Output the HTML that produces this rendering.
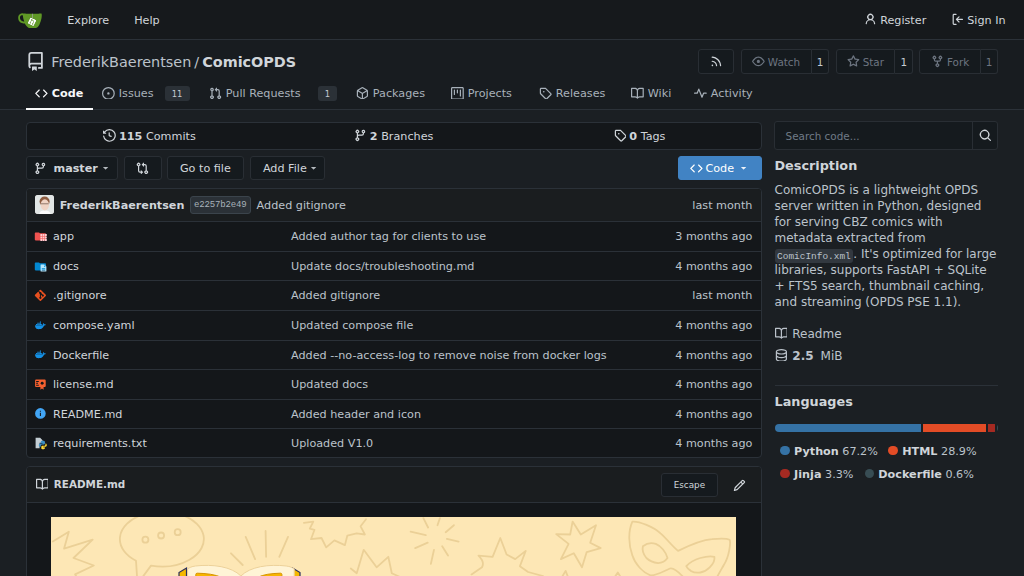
<!DOCTYPE html>
<html lang="en">
<head>
<meta charset="utf-8">
<title>FrederikBaerentsen/ComicOPDS</title>
<style>
*{box-sizing:border-box;margin:0;padding:0}
html,body{width:1024px;height:576px;overflow:hidden;background:#1b1f23}
body{font-family:"DejaVu Sans","Liberation Sans",sans-serif;font-size:11.2px;color:#d0d5da;position:relative;line-height:1}
svg{display:block;fill:currentColor;flex:none}
.abs{position:absolute}
.row{display:flex;align-items:center;white-space:nowrap;padding-top:1.6px}
.row>svg{margin-top:-1.6px}
b{font-weight:700}
#nav{left:0;top:0;width:1024px;height:40px;background:#16191c;border-bottom:1px solid #2b3138}
#nav .t{position:absolute;top:0;height:39px;font-size:11.2px;color:#d0d5da;gap:3.2px}
#sec{left:0;top:40px;width:1024px;height:70px;background:#181c20;border-bottom:1px solid #2b3138}
#title{left:25.6px;top:51.4px;height:20px;font-size:14.4px;color:#bcc3cb}
#title b{color:#d0d5da}
.hbtn{position:absolute;top:49px;height:24.600px;border:1px solid #292e34;background:#151a1e;color:#6d7581;font-size:10.4px;border-radius:3px;justify-content:center;gap:3px}
.hcnt{position:absolute;top:49px;height:24.600px;border:1px solid #292e34;background:#151a1e;color:#c4cad0;font-size:10.4px;border-radius:0 3px 3px 0;justify-content:center;border-left:none}
.tab{position:absolute;top:77px;height:32px;font-size:11.2px;color:#a8b1ba;gap:4px}
.tab.act{color:#f7f8f9;font-weight:700}
.lbl{display:inline-flex;align-items:center;justify-content:center;background:#2b3137;color:#c4cad0;font-size:8.4px;border-radius:3px;height:15px;font-weight:400;padding-top:1px}
.box{position:absolute;background:#14171a;border:1px solid #2b3138;border-radius:4px}
.btn{position:absolute;top:156.2px;height:23.6px;border:1px solid #292e34;background:#151a1e;color:#d0d5da;font-size:11.2px;border-radius:3px}
.fr{position:absolute;left:0;width:734px;height:29.570px;border-top:1px solid #2b3138;font-size:11.2px}
.fr .n{position:absolute;left:26px;top:0;height:100%;color:#d0d5da}
.fr .i{position:absolute;left:7.4px;top:7.8px}
.fr .m{position:absolute;left:264px;top:0;height:100%;color:#bcc3cb}
.fr .d{position:absolute;right:8.6px;top:0;height:100%;color:#bcc3cb}
.fr .row{padding-top:1px}
.desc{left:774.5px;width:240px;font-size:12px;line-height:16px;color:#bcc3cb}
code,.mono{font-family:"Liberation Mono","DejaVu Sans Mono",monospace}
code{line-height:1;font-size:9.45px;background:#32383f;border-radius:3px;padding:1.5px 2.6px;color:#bcc3cb}
.lang{font-size:11.2px;color:#bcc3cb}.lang i{display:block;width:9.8px;height:9.8px;border-radius:50%;margin-right:4px;margin-top:-1.6px}.lang b{color:#d0d5da}
</style>
</head>
<body>
<!-- NAVBAR -->
<div id="nav" class="abs">
  <svg class="abs" style="left:17.8px;top:7.7px" width="24" height="24" viewBox="0 0 640 640"><path d="M395.9 484.2l-126.9-61c-12.500-6-17.900-21.200-11.800-33.800l61-126.900c6-12.500 21.200-17.900 33.800-11.800 17.200 8.300 27.100 13 27.100 13l-.1-109.200 16.700-.1.100 117.100s57.400 24.200 83.100 40.100c3.700 2.300 10.200 6.800 12.900 14.400 2.100 6.100 2 13.100-1 19.300l-61 126.900c-6.200 12.700-21.400 18.100-33.900 12z" fill="#fff"/><path d="M622.700 149.800c-4.100-4.100-9.600-4-9.600-4s-117.200 6.600-177.900 8c-13.300.3-26.500.6-39.600.7v117.200c-5.500-2.600-11.100-5.300-16.600-7.900 0-36.400-.1-109.200-.1-109.200-29 .4-89.200-2.200-89.200-2.200s-141.400-7.100-156.800-8.500c-9.800-.6-22.500-2.100-39 1.500-8.700 1.800-33.500 7.400-53.800 26.900C-4.900 212.400 6.600 276.200 8 285.800c1.700 11.700 6.900 44.200 31.700 72.500 45.800 56.100 144.400 54.800 144.400 54.800s12.100 28.900 30.600 55.500c25 33.100 50.700 58.900 75.700 62 63 0 188.900-.1 188.900-.1s12 .1 28.300-10.300c14-8.500 26.500-23.400 26.500-23.400S547 483 565 451.500c5.500-9.700 10.100-19.100 14.100-28 0 0 55.200-117.100 55.200-231.100-1.100-34.500-9.600-40.600-11.600-42.600zM125.600 353.900c-25.900-8.500-36.900-18.700-36.900-18.700S69.600 321.800 60 295.400c-16.500-44.200-1.400-71.200-1.400-71.200s8.400-22.500 38.500-30c13.800-3.700 31-3.100 31-3.100s7.100 59.400 15.700 94.200c7.200 29.200 24.800 77.700 24.800 77.700s-26.100-3.100-43-9.100zm300.300 107.600s-6.100 14.500-19.600 15.400c-5.800.4-10.300-1.200-10.300-1.200s-.3-.1-5.300-2.100l-112.900-55s-10.900-5.700-12.800-15.600c-2.200-8.100 2.700-18.100 2.700-18.100L322 273s4.800-9.700 12.200-13c.6-.3 2.300-1 4.500-1.500 8.100-2.100 18 2.800 18 2.800L467.400 315s12.600 5.700 15.300 16.200c1.900 7.400-.5 14-1.800 17.200-6.300 15.400-55 113.100-55 113.100z" fill="#609926"/><path d="M326.800 380.100c-8.200.1-15.400 5.800-17.300 13.800-1.900 8 2 16.300 9.100 20 7.700 4 17.500 1.800 22.700-5.400 5.100-7.100 4.300-16.900-1.800-23.100l24-49.100c1.500.1 3.700.2 6.200-.5 4.100-.9 7.100-3.600 7.100-3.600 4.200 1.800 8.600 3.800 13.200 6.100 4.800 2.400 9.300 4.900 13.400 7.300.9.500 1.800 1.100 2.800 1.900 1.600 1.300 3.400 3.100 4.700 5.500 1.900 5.500-1.900 14.900-1.900 14.900-2.300 7.600-18.400 40.600-18.400 40.600-8.100-.2-15.300 5-17.700 12.500-2.600 8.100 1.100 17.300 8.900 21.300 7.800 4 17.400 1.700 22.500-5.300 5-6.800 4.600-16.300-1.100-22.600 1.900-3.700 3.700-7.400 5.600-11.300 5-10.400 13.500-30.400 13.500-30.400.9-1.700 5.700-10.300 2.700-21.300-2.500-11.400-12.600-16.700-12.600-16.700-12.200-7.900-29.200-15.200-29.200-15.200s0-4.100-1.100-7.100c-1.100-3.100-2.800-5.100-3.900-6.300 4.700-9.700 9.400-19.300 14.100-29-4.100-2-8.100-4-12.200-6.100-4.800 9.800-9.700 19.700-14.500 29.500-6.700-.1-12.900 3.500-16.100 9.400-3.400 6.300-2.700 14.100 1.900 19.800l-24.600 50.400z" fill="#609926"/></svg>
  <div class="t row" style="left:67.2px">Explore</div>
  <div class="t row" style="left:134.2px">Help</div>
  <div class="t row" style="left:864.2px"><svg width="12.8" height="12.8" viewBox="0 0 16 16"><path d="M10.561 8.073a6.005 6.005 0 0 1 3.432 5.142.75.75 0 1 1-1.498.07 4.5 4.5 0 0 0-8.99 0 .75.75 0 0 1-1.498-.07 6.004 6.004 0 0 1 3.431-5.142 3.999 3.999 0 1 1 5.123 0ZM10.5 5a2.5 2.5 0 1 0-5 0 2.5 2.5 0 0 0 5 0Z"/></svg>Register</div>
  <div class="t row" style="left:951.2px"><svg width="12.8" height="12.8" viewBox="0 0 16 16"><path d="M2 2.75C2 1.784 2.784 1 3.75 1h2.5a.75.75 0 0 1 0 1.5h-2.5a.25.25 0 0 0-.25.25v10.5c0 .138.112.25.25.25h2.5a.75.75 0 0 1 0 1.5h-2.5A1.75 1.75 0 0 1 2 13.25Zm6.56 4.5h5.69a.75.75 0 0 1 0 1.5H8.56l1.97 1.97a.749.749 0 0 1-.326 1.275.749.749 0 0 1-.734-.215L6.22 8.53a.75.75 0 0 1 0-1.06l3.25-3.25a.749.749 0 0 1 1.275.326.749.749 0 0 1-.215.734Z"/></svg>Sign In</div>
</div>
<!-- REPO HEADER -->
<div id="sec" class="abs"></div>
<div id="title" class="abs row"><svg width="19.2" height="19.2" viewBox="0 0 16 16" style="margin-right:6.4px;color:#d0d5da"><path d="M2 2.5A2.5 2.5 0 0 1 4.5 0h8.75a.75.75 0 0 1 .75.75v12.5a.75.75 0 0 1-.75.75h-2.5a.75.75 0 0 1 0-1.5h1.75v-2h-8a1 1 0 0 0-.714 1.7.75.75 0 1 1-1.072 1.05A2.495 2.495 0 0 1 2 11.5Zm10.5-1h-8a1 1 0 0 0-1 1v6.708A2.486 2.486 0 0 1 4.5 9h8ZM5 12.25a.25.25 0 0 1 .25-.25h3.5a.25.25 0 0 1 .25.25v3.25a.25.25 0 0 1-.4.2l-1.45-1.087a.249.249 0 0 0-.3 0L5.4 15.7a.25.25 0 0 1-.4-.2Z"/></svg><span>FrederikBaerentsen</span><span style="margin:0 3px">/</span><b>ComicOPDS</b></div>
<div class="hbtn row" style="left:697.6px;width:36.8px"><svg width="12.8" height="12.8" viewBox="0 0 16 16" style="color:#d0d5da"><path d="M2.002 2.725a.75.75 0 0 1 .797-.699C8.79 2.42 13.58 7.21 13.974 13.201a.75.75 0 0 1-1.497.098 10.502 10.502 0 0 0-9.776-9.776.747.747 0 0 1-.7-.798ZM2.84 7.05h-.002a7.002 7.002 0 0 1 6.113 6.111.75.75 0 0 1-1.49.178 5.503 5.503 0 0 0-4.8-4.8.75.75 0 0 1 .179-1.489ZM2 13a1 1 0 1 1 2 0 1 1 0 0 1-2 0Z"/></svg></div>
<div class="hbtn row" style="left:740.5px;width:71.2px;border-radius:3px 0 0 3px"><svg width="12.8" height="12.8" viewBox="0 0 16 16"><path d="M8 2c1.981 0 3.671.992 4.933 2.078 1.27 1.091 2.187 2.345 2.637 3.023a1.62 1.62 0 0 1 0 1.798c-.45.678-1.367 1.932-2.637 3.023C11.67 13.008 9.981 14 8 14c-1.981 0-3.671-.992-4.933-2.078C1.797 10.83.88 9.576.43 8.898a1.62 1.62 0 0 1 0-1.798c.45-.677 1.367-1.931 2.637-3.022C4.33 2.992 6.019 2 8 2ZM1.679 7.932a.12.12 0 0 0 0 .136c.411.622 1.241 1.75 2.366 2.717C5.176 11.758 6.527 12.5 8 12.5c1.473 0 2.825-.742 3.955-1.715 1.124-.967 1.954-2.096 2.366-2.717a.12.12 0 0 0 0-.136c-.412-.621-1.242-1.75-2.366-2.717C10.824 4.242 9.473 3.5 8 3.5c-1.473 0-2.825.742-3.955 1.715-1.124.967-1.954 2.096-2.366 2.717ZM8 10a2 2 0 1 1-.001-3.999A2 2 0 0 1 8 10Z"/></svg>Watch</div>
<div class="hcnt row" style="left:811.7px;width:17.8px">1</div>
<div class="hbtn row" style="left:835.9px;width:59.1px;border-radius:3px 0 0 3px"><svg width="12.8" height="12.8" viewBox="0 0 16 16"><path d="M8 .25a.75.75 0 0 1 .673.418l1.882 3.815 4.21.612a.75.75 0 0 1 .416 1.279l-3.046 2.97.719 4.192a.751.751 0 0 1-1.088.791L8 12.347l-3.766 1.98a.75.75 0 0 1-1.088-.79l.72-4.194L.818 6.374a.75.75 0 0 1 .416-1.28l4.21-.611L7.327.668A.75.75 0 0 1 8 .25Zm0 2.445L6.615 5.5a.75.75 0 0 1-.564.41l-3.097.45 2.24 2.184a.75.75 0 0 1 .216.664l-.528 3.084 2.769-1.456a.75.75 0 0 1 .698 0l2.77 1.456-.53-3.084a.75.75 0 0 1 .216-.664l2.24-2.183-3.096-.45a.75.75 0 0 1-.564-.41L8 2.694Z"/></svg>Star</div>
<div class="hcnt row" style="left:895px;width:18.4px">1</div>
<div class="hbtn row" style="left:919.2px;width:62px;border-radius:3px 0 0 3px"><svg width="12.8" height="12.8" viewBox="0 0 16 16"><path d="M5 5.372v.878c0 .414.336.75.75.75h4.5a.75.75 0 0 0 .75-.75v-.878a2.25 2.25 0 1 1 1.5 0v.878a2.25 2.25 0 0 1-2.25 2.25h-1.5v2.128a2.251 2.251 0 1 1-1.5 0V8.5h-1.5A2.25 2.25 0 0 1 3.5 6.25v-.878a2.25 2.25 0 1 1 1.5 0ZM5 3.25a.75.75 0 1 0-1.5 0 .75.75 0 0 0 1.5 0Zm6.75.75a.75.75 0 1 0 0-1.5.75.75 0 0 0 0 1.5Zm-3 8.75a.75.75 0 1 0-1.5 0 .75.75 0 0 0 1.5 0Z"/></svg>Fork</div>
<div class="hcnt row" style="left:981.200px;width:16.800px;color:#6d7581">1</div>
<!-- TABS -->
<div class="tab act row" style="left:35px"><svg width="12.8" height="12.8" viewBox="0 0 16 16"><path d="m11.28 3.22 4.25 4.25a.75.75 0 0 1 0 1.06l-4.25 4.25a.749.749 0 0 1-1.275-.326.749.749 0 0 1 .215-.734L13.94 8l-3.72-3.72a.749.749 0 0 1 .326-1.275.749.749 0 0 1 .734.215Zm-6.56 0a.751.751 0 0 1 1.042.018.751.751 0 0 1 .018 1.042L2.06 8l3.72 3.72a.749.749 0 0 1-.326 1.275.749.749 0 0 1-.734-.215L.47 8.53a.75.75 0 0 1 0-1.06Z"/></svg>Code</div>
<div class="abs" style="left:26px;top:107.8px;width:67px;height:2.2px;background:#f7f8f9"></div>
<div class="tab row" style="left:102px"><svg width="12.8" height="12.8" viewBox="0 0 16 16"><path d="M8 9.5a1.5 1.5 0 1 0 0-3 1.5 1.5 0 0 0 0 3ZM8 0a8 8 0 1 1 0 16A8 8 0 0 1 8 0ZM1.5 8a6.5 6.5 0 1 0 13 0 6.5 6.5 0 0 0-13 0Z"/></svg>Issues<span class="lbl" style="width:25px;margin-left:7px">11</span></div>
<div class="tab row" style="left:209px"><svg width="12.8" height="12.8" viewBox="0 0 16 16"><path d="M1.5 3.25a2.25 2.25 0 1 1 3 2.122v5.256a2.251 2.251 0 1 1-1.5 0V5.372A2.25 2.25 0 0 1 1.5 3.25Zm5.677-.177L9.573.677A.25.25 0 0 1 10 .854V2.5h1A2.5 2.5 0 0 1 13.5 5v5.628a2.251 2.251 0 1 1-1.5 0V5a1 1 0 0 0-1-1h-1v1.646a.25.25 0 0 1-.427.177L7.177 3.427a.25.25 0 0 1 0-.354ZM3.75 2.5a.75.75 0 1 0 0 1.5.75.75 0 0 0 0-1.5Zm0 9.5a.75.75 0 1 0 0 1.5.75.75 0 0 0 0-1.5Zm8.25.75a.75.75 0 1 0 1.5 0 .75.75 0 0 0-1.5 0Z"/></svg>Pull Requests<span class="lbl" style="width:19px;margin-left:13.5px">1</span></div>
<div class="tab row" style="left:356px"><svg width="12.8" height="12.8" viewBox="0 0 16 16"><path d="m8.878.392 5.25 3.045c.54.314.872.89.872 1.514v6.098a1.75 1.75 0 0 1-.872 1.514l-5.25 3.045a1.75 1.75 0 0 1-1.756 0l-5.25-3.045A1.75 1.75 0 0 1 1 11.049V4.951c0-.624.332-1.201.872-1.514L7.122.392a1.75 1.75 0 0 1 1.756 0ZM7.875 1.69l-4.63 2.685L8 7.133l4.755-2.758-4.63-2.685a.248.248 0 0 0-.25 0ZM2.5 5.677v5.372c0 .09.047.171.125.216l4.625 2.683V8.432Zm6.25 8.271 4.625-2.683a.25.25 0 0 0 .125-.216V5.677L8.75 8.432Z"/></svg>Packages</div>
<div class="tab row" style="left:451px"><svg width="12.8" height="12.8" viewBox="0 0 16 16"><path d="M1.75 0h12.5C15.216 0 16 .784 16 1.75v12.5A1.75 1.75 0 0 1 14.25 16H1.75A1.75 1.75 0 0 1 0 14.25V1.75C0 .784.784 0 1.75 0ZM1.5 1.75v12.5c0 .138.112.25.25.25h12.5a.25.25 0 0 0 .25-.25V1.75a.25.25 0 0 0-.25-.25H1.75a.25.25 0 0 0-.25.25ZM11.75 3a.75.75 0 0 1 .75.75v7.5a.75.75 0 0 1-1.5 0v-7.5a.75.75 0 0 1 .75-.75Zm-8.25.75a.75.75 0 0 1 1.5 0v5.5a.75.75 0 0 1-1.5 0ZM8 3a.75.75 0 0 1 .75.75v3.5a.75.75 0 0 1-1.5 0v-3.5A.75.75 0 0 1 8 3Z"/></svg>Projects</div>
<div class="tab row" style="left:539px"><svg width="12.8" height="12.8" viewBox="0 0 16 16"><path d="M1 7.775V2.75C1 1.784 1.784 1 2.75 1h5.025c.464 0 .91.184 1.238.513l6.25 6.25a1.75 1.75 0 0 1 0 2.474l-5.026 5.026a1.75 1.75 0 0 1-2.474 0l-6.25-6.25A1.752 1.752 0 0 1 1 7.775Zm1.5 0c0 .066.026.13.073.177l6.25 6.25a.25.25 0 0 0 .354 0l5.025-5.025a.25.25 0 0 0 0-.354l-6.25-6.25a.25.25 0 0 0-.177-.073H2.75a.25.25 0 0 0-.25.25ZM6 5a1 1 0 1 1 0 2 1 1 0 0 1 0-2Z"/></svg>Releases</div>
<div class="tab row" style="left:631px"><svg width="12.8" height="12.8" viewBox="0 0 16 16"><path d="M0 1.75A.75.75 0 0 1 .75 1h4.253c1.227 0 2.317.59 3 1.501A3.743 3.743 0 0 1 11.006 1h4.245a.75.75 0 0 1 .75.75v10.5a.75.75 0 0 1-.75.75h-4.507a2.25 2.25 0 0 0-1.591.659l-.622.621a.75.75 0 0 1-1.06 0l-.622-.621A2.25 2.25 0 0 0 5.258 13H.75a.75.75 0 0 1-.75-.75Zm7.251 10.324.004-5.073-.002-2.253A2.25 2.25 0 0 0 5.003 2.5H1.5v9h3.757a3.75 3.75 0 0 1 1.994.574ZM8.755 4.75l-.004 7.322a3.752 3.752 0 0 1 1.992-.572H14.5v-9h-3.495a2.25 2.25 0 0 0-2.25 2.25Z"/></svg>Wiki</div>
<div class="tab row" style="left:694px"><svg width="12.8" height="12.8" viewBox="0 0 16 16"><path d="M6 2c.306 0 .582.187.696.471L10 10.731l1.304-3.26A.751.751 0 0 1 12 7h3.25a.75.75 0 0 1 0 1.5h-2.742l-1.812 4.528a.751.751 0 0 1-1.392 0L6 4.77 4.696 8.03A.75.75 0 0 1 4 8.5H.75a.75.75 0 0 1 0-1.5h2.742l1.812-4.529A.751.751 0 0 1 6 2Z"/></svg>Activity</div>

<!-- STATS -->
<div class="box" style="left:26px;top:122px;width:736px;height:27.6px;font-size:11.2px">
  <div class="abs row" style="left:0;width:245px;top:0;height:100%;justify-content:center;gap:3px"><svg width="12.8" height="12.8" viewBox="0 0 16 16"><path d="m.427 1.927 1.215 1.215a8.002 8.002 0 1 1-1.6 5.685.75.75 0 1 1 1.493-.154 6.5 6.5 0 1 0 1.18-4.458l1.358 1.358A.25.25 0 0 1 3.896 6H.25A.25.25 0 0 1 0 5.75V2.104a.25.25 0 0 1 .427-.177ZM7.75 4a.75.75 0 0 1 .75.75v2.992l2.028.812a.75.75 0 0 1-.557 1.392l-2.5-1A.751.751 0 0 1 7 8.25v-3.5A.75.75 0 0 1 7.750 4Z"/></svg><span><b>115</b> Commits</span></div>
  <div class="abs row" style="left:244.200px;width:245px;top:0;height:100%;justify-content:center;gap:3px"><svg width="12.8" height="12.8" viewBox="0 0 16 16"><path d="M9.5 3.25a2.25 2.25 0 1 1 3 2.122V6A2.5 2.5 0 0 1 10 8.5H6a1 1 0 0 0-1 1v1.128a2.251 2.251 0 1 1-1.5 0V5.372a2.25 2.25 0 1 1 1.5 0v1.836A2.493 2.493 0 0 1 6 7h4a1 1 0 0 0 1-1v-.628A2.25 2.25 0 0 1 9.5 3.25Zm-6 0a.75.75 0 1 0 1.5 0 .75.75 0 0 0-1.5 0Zm8.25-.75a.75.75 0 1 0 0 1.5.75.75 0 0 0 0-1.5ZM4.25 12a.75.75 0 1 0 0 1.5.75.75 0 0 0 0-1.5Z"/></svg><span><b>2</b> Branches</span></div>
  <div class="abs row" style="left:490px;width:245px;top:0;height:100%;justify-content:center;gap:3px"><svg width="12.8" height="12.8" viewBox="0 0 16 16"><path d="M1 7.775V2.75C1 1.784 1.784 1 2.75 1h5.025c.464 0 .91.184 1.238.513l6.25 6.25a1.75 1.75 0 0 1 0 2.474l-5.026 5.026a1.75 1.75 0 0 1-2.474 0l-6.25-6.25A1.752 1.752 0 0 1 1 7.775Zm1.5 0c0 .066.026.13.073.177l6.25 6.25a.25.25 0 0 0 .354 0l5.025-5.025a.25.25 0 0 0 0-.354l-6.25-6.25a.25.25 0 0 0-.177-.073H2.75a.25.25 0 0 0-.25.25ZM6 5a1 1 0 1 1 0 2 1 1 0 0 1 0-2Z"/></svg><span><b>0</b> Tags</span></div>
</div>
<!-- BUTTON ROW -->
<div class="btn row" style="left:26px;width:92px;font-weight:700;padding-left:7.4px"><svg width="12.8" height="12.8" viewBox="0 0 16 16"><path d="M9.5 3.25a2.25 2.25 0 1 1 3 2.122V6A2.5 2.5 0 0 1 10 8.5H6a1 1 0 0 0-1 1v1.128a2.251 2.251 0 1 1-1.5 0V5.372a2.25 2.25 0 1 1 1.5 0v1.836A2.493 2.493 0 0 1 6 7h4a1 1 0 0 0 1-1v-.628A2.25 2.25 0 0 1 9.5 3.25Zm-6 0a.75.75 0 1 0 1.5 0 .75.75 0 0 0-1.5 0Zm8.25-.75a.75.75 0 1 0 0 1.5.75.75 0 0 0 0-1.5ZM4.25 12a.75.75 0 1 0 0 1.5.75.75 0 0 0 0-1.5Z"/></svg><span style="margin-left:6.3px">master</span><svg width="11.2" height="11.2" viewBox="0 0 16 16" style="margin-left:2.300px;opacity:.85"><path d="m4.427 7.427 3.396 3.396a.25.25 0 0 0 .354 0l3.396-3.396A.25.25 0 0 0 11.396 7H4.604a.25.25 0 0 0-.177.427Z"/></svg></div>
<div class="btn row" style="left:123.5px;width:38.2px;justify-content:center"><svg width="12.8" height="12.8" viewBox="0 0 16 16"><path d="M9.573.677A.25.25 0 0 1 10 .854V2.5h1A2.5 2.5 0 0 1 13.5 5v5.628a2.251 2.251 0 1 1-1.5 0V5a1 1 0 0 0-1-1h-1v1.646a.25.25 0 0 1-.427.177L7.177 3.427a.25.25 0 0 1 0-.354ZM6 12v-1.646a.25.25 0 0 1 .427-.177l2.396 2.396a.25.25 0 0 1 0 .354l-2.396 2.396A.25.25 0 0 1 6 15.146V13.5H5A2.5 2.5 0 0 1 2.5 11V5.372a2.25 2.25 0 1 1 1.5 0V11a1 1 0 0 0 1 1ZM4 3.25a.75.75 0 1 0-1.5 0 .75.75 0 0 0 1.5 0ZM12.75 12a.75.75 0 1 0 0 1.5.75.75 0 0 0 0-1.5Z"/></svg></div>
<div class="btn row" style="left:167.2px;width:76.4px;justify-content:center">Go to file</div>
<div class="btn row" style="left:249.7px;width:75.2px;padding-left:12.2px">Add File<svg width="11.2" height="11.2" viewBox="0 0 16 16" style="margin-left:1.400px;opacity:.85"><path d="m4.427 7.427 3.396 3.396a.25.25 0 0 0 .354 0l3.396-3.396A.25.25 0 0 0 11.396 7H4.604a.25.25 0 0 0-.177.427Z"/></svg></div>
<div class="btn row" style="left:677.5px;width:84.5px;background:#4183c4;border-color:#4183c4;color:#fff;padding-left:11.5px"><svg width="12.8" height="12.8" viewBox="0 0 16 16"><path d="m11.28 3.22 4.25 4.25a.75.75 0 0 1 0 1.06l-4.25 4.25a.749.749 0 0 1-1.275-.326.749.749 0 0 1 .215-.734L13.94 8l-3.72-3.72a.749.749 0 0 1 .326-1.275.749.749 0 0 1 .734.215Zm-6.56 0a.751.751 0 0 1 1.042.018.751.751 0 0 1 .018 1.042L2.06 8l3.72 3.72a.749.749 0 0 1-.326 1.275.749.749 0 0 1-.734-.215L.47 8.53a.75.75 0 0 1 0-1.06Z"/></svg><span style="margin-left:2.6px">Code</span><svg width="11.2" height="11.2" viewBox="0 0 16 16" style="margin-left:3.500px;opacity:.9"><path d="m4.427 7.427 3.396 3.396a.25.25 0 0 0 .354 0l3.396-3.396A.25.25 0 0 0 11.396 7H4.604a.25.25 0 0 0-.177.427Z"/></svg></div>
<!-- FILE TABLE -->
<div class="box" style="left:26px;top:188px;width:736px;height:270px;overflow:hidden">
  <div class="abs" style="left:0;top:0;width:734px;height:33px;background:#1a1d1f"></div>
  <div class="abs" id="avatar" style="left:7.8px;top:6.2px;width:19.2px;height:19.2px;border-radius:3px;overflow:hidden;background:#d9d4cf"><svg width="19.2" height="19.2" viewBox="0 0 24 24"><defs><filter id="bl" x="-20%" y="-20%" width="140%" height="140%"><feGaussianBlur stdDeviation=".7"/></filter></defs><rect width="24" height="24" fill="#e2e6e5"/><g filter="url(#bl)"><path d="M5 26c0-5 3-6.500 7-6.500s8 1.500 8 6.500z" fill="#fbfbfb"/><ellipse cx="12" cy="8" rx="6.300" ry="6.200" fill="#8d5c40"/><ellipse cx="12.300" cy="12.300" rx="5.300" ry="7" fill="#efd3c4"/><path d="M7.500 11h9.500" stroke="#7a6358" stroke-width="1"/></g></svg></div>
  <div class="abs row" style="left:32.7px;top:0;height:32.4px;font-weight:700;color:#d0d5da">FrederikBaerentsen</div>
  <div class="abs row mono" style="left:162.7px;top:6.6px;height:18.6px;width:61px;justify-content:center;background:#2b3137;border:1px solid #3b444c;border-radius:3px;font-size:9px;letter-spacing:-.150px;color:#a8b1ba;padding-top:2.200px">e2257b2e49</div>
  <div class="abs row" style="left:229.6px;top:0;height:32.4px;color:#bcc3cb">Added gitignore</div>
  <div class="abs row" style="right:8.6px;top:0;height:32.4px;color:#bcc3cb">last month</div>
  <div class="fr" style="top:32.2px"><svg class="i" width="12.8" height="12.8" viewBox="0 0 32 32"><path fill="#ef5350" d="m13.844 7.536-1.288-1.072A2 2 0 0 0 11.276 6H4a2 2 0 0 0-2 2v16a2 2 0 0 0 2 2h24a2 2 0 0 0 2-2V10a2 2 0 0 0-2-2H15.124a2 2 0 0 1-1.280-.464Z"/><path fill="#ffcdd2" d="M16 10h4.500v5H16zm5.750 0h4.500v5h-4.500zm5.750 0H32v5h-4.500zM16 16.250h4.500v5H16zm5.750 0h4.500v5h-4.500zm5.750 0H32v5h-4.500zM16 22.500h4.500v5H16zm5.750 0h4.500v5h-4.500zm5.750 0H32v5h-4.500z"/></svg><div class="n row">app</div><div class="m row">Added author tag for clients to use</div><div class="d row">3 months ago</div></div>
  <div class="fr" style="top:61.8px"><svg class="i" width="12.8" height="12.8" viewBox="0 0 32 32"><path fill="#0288d1" d="m13.844 7.536-1.288-1.072A2 2 0 0 0 11.276 6H4a2 2 0 0 0-2 2v16a2 2 0 0 0 2 2h24a2 2 0 0 0 2-2V10a2 2 0 0 0-2-2H15.124a2 2 0 0 1-1.280-.464Z"/><path fill="#b3e5fc" d="M25.500 11H18a1.500 1.500 0 0 0-1.500 1.500v15A1.500 1.500 0 0 0 18 29h11.500a1.500 1.500 0 0 0 1.500-1.500v-11zM28 26h-8.500v-2H28zm0-4h-8.500v-2H28zm-3-5v-4l4.500 4z"/></svg><div class="n row">docs</div><div class="m row">Update docs/troubleshooting.md</div><div class="d row">4 months ago</div></div>
  <div class="fr" style="top:91.3px"><svg class="i" width="12.8" height="12.8" viewBox="0 0 32 32"><path fill="#e8501f" d="M29.415 14.586 17.414 2.586a2 2 0 0 0-2.828 0l-12 12a2 2 0 0 0 0 2.828l12 12a2 2 0 0 0 2.828 0l12-12a2 2 0 0 0 .001-2.828Z"/><g stroke="#14171a" stroke-width="2.6" stroke-linecap="round" fill="none"><path d="M11.800 6.200 16 10.400v11M16.800 11.200l4.800 4.800"/></g><circle cx="16" cy="10.400" r="2.700" fill="#14171a"/><circle cx="16" cy="22" r="2.700" fill="#14171a"/><circle cx="22" cy="16.400" r="2.700" fill="#14171a"/></svg><div class="n row">.gitignore</div><div class="m row">Added gitignore</div><div class="d row">last month</div></div>
  <div class="fr" style="top:120.9px"><svg class="i" width="12.8" height="12.8" viewBox="0 0 24 24"><path fill="#1490e4" d="M21.810 10.250c-.06-.04-.56-.43-1.640-.43-.28 0-.56.030-.84.080-.21-1.400-1.380-2.110-1.430-2.140l-.29-.17-.18.270c-.24.360-.43.770-.51 1.190-.2.800-.08 1.560.33 2.210-.49.280-1.290.350-1.460.350H2.620c-.34 0-.62.280-.62.630 0 1.150.18 2.300.58 3.380.45 1.190 1.130 2.070 2 2.610.98.600 2.590.940 4.420.940.790 0 1.610-.07 2.420-.22 1.120-.2 2.200-.59 3.190-1.160a8.300 8.300 0 0 0 2.170-1.790c1.050-1.170 1.670-2.500 2.120-3.650h.19c1.140 0 1.850-.46 2.240-.85.260-.24.450-.53.590-.87l.08-.24-.19-.14M3.700 9.340h2.100v1.900H3.700zm2.420 0h2.100v1.900h-2.100zm2.450 0h2.100v1.900h-2.100zm2.450 0h2.100v1.900h-2.100zm2.450 0h2.100v1.900h-2.100zM6.120 7.080h2.100v1.900h-2.100zm2.450 0h2.100v1.900h-2.100zm2.450 0h2.100v1.900h-2.100zm0-2.280h2.100v1.900h-2.100z"/></svg><div class="n row">compose.yaml</div><div class="m row">Updated compose file</div><div class="d row">4 months ago</div></div>
  <div class="fr" style="top:150.5px"><svg class="i" width="12.8" height="12.8" viewBox="0 0 24 24"><path fill="#1490e4" d="M21.810 10.250c-.06-.04-.56-.43-1.640-.43-.28 0-.56.030-.84.080-.21-1.400-1.380-2.110-1.430-2.140l-.29-.17-.18.270c-.24.360-.43.770-.51 1.190-.2.800-.08 1.560.33 2.210-.49.280-1.290.350-1.460.350H2.620c-.34 0-.62.280-.62.630 0 1.150.18 2.300.58 3.380.45 1.190 1.130 2.070 2 2.610.98.600 2.590.940 4.420.940.790 0 1.610-.07 2.420-.22 1.120-.2 2.200-.59 3.190-1.160a8.300 8.300 0 0 0 2.170-1.790c1.050-1.170 1.670-2.500 2.120-3.650h.19c1.140 0 1.850-.46 2.240-.85.260-.24.450-.53.590-.87l.08-.24-.19-.14M3.700 9.340h2.100v1.900H3.700zm2.420 0h2.100v1.900h-2.100zm2.450 0h2.100v1.900h-2.100zm2.450 0h2.100v1.900h-2.100zm2.450 0h2.100v1.900h-2.100zM6.120 7.080h2.100v1.900h-2.100zm2.450 0h2.100v1.900h-2.100zm2.450 0h2.100v1.900h-2.100zm0-2.280h2.100v1.900h-2.100z"/></svg><div class="n row">Dockerfile</div><div class="m row">Added --no-access-log to remove noise from docker logs</div><div class="d row">4 months ago</div></div>
  <div class="fr" style="top:180.1px"><svg class="i" width="12.8" height="12.8" viewBox="0 0 24 24"><path fill="#f4602f" d="M4 3h16a2 2 0 0 1 2 2v10a2 2 0 0 1-2 2h-2v5l-3-2.500L12 22v-5H4a2 2 0 0 1-2-2V5a2 2 0 0 1 2-2z"/><path fill="#14171a" d="M4 5.500h5v1.800H4zm0 3.600h3.500v1.800H4zm0 3.600h5v1.800H4z"/><circle cx="15.300" cy="10" r="2.800" fill="#14171a"/></svg><div class="n row">license.md</div><div class="m row">Updated docs</div><div class="d row">4 months ago</div></div>
  <div class="fr" style="top:209.6px"><svg class="i" width="12.8" height="12.8" viewBox="0 0 24 24"><path fill="#42a5f5" d="M13 9h-2V7h2m0 10h-2v-6h2m-1-9A10 10 0 0 0 2 12a10 10 0 0 0 10 10 10 10 0 0 0 10-10A10 10 0 0 0 12 2z"/></svg><div class="n row">README.md</div><div class="m row">Added header and icon</div><div class="d row">4 months ago</div></div>
  <div class="fr" style="top:239.2px"><svg class="i" width="12.8" height="12.8" viewBox="0 0 24 24"><path fill="#c3ced4" d="M3 1.500h8.500l4.500 4.500v5h-5.500v10H3zM5 6h5v1.500H5zm0 3.500h5V11H5zm0 3.500h4v1.500H5zm0 3.500h4V18H5z"/><path fill="#3b8fc4" d="M16 7c-2 0-3.200.9-3.200 2.100v2.100H16v.8h-4.500c-1.300 0-2.500 1-2.500 3.200s1 3.200 2.300 3.200h1.500v-2c0-1.300 1.200-2.500 2.500-2.500h3.400c1 0 1.900-.9 1.900-2v-2.800C20.600 7.900 19 7 16 7z"/><path fill="#fdd835" d="M21.500 12v2c0 1.400-1.200 2.500-2.500 2.500h-3.400c-1 0-1.900.9-1.900 2v2.500c0 1 1 1.800 3.300 1.800s3.300-.8 3.300-1.800v-1.800H17v-.8h4.800c1.300 0 2.200-1.200 2.200-3.200S23 12 21.500 12z"/></svg><div class="n row">requirements.txt</div><div class="m row">Uploaded V1.0</div><div class="d row">4 months ago</div></div>
</div>
<!-- README -->
<div class="box" style="left:26px;top:466px;width:736px;height:130px;overflow:hidden;border-radius:4px 4px 0 0">
  <div class="abs" style="left:0;top:0;width:734px;height:36px;background:#1a1d1f;border-bottom:1px solid #2b3138"></div>
  <div class="abs row" style="left:8.500px;top:0;height:33.800px;font-weight:700;font-size:10.4px;gap:5.500px;color:#d0d5da"><svg width="12.8" height="12.8" viewBox="0 0 16 16"><path d="M0 1.75A.75.75 0 0 1 .75 1h4.253c1.227 0 2.317.59 3 1.501A3.743 3.743 0 0 1 11.006 1h4.245a.75.75 0 0 1 .75.75v10.5a.75.75 0 0 1-.75.75h-4.507a2.25 2.25 0 0 0-1.591.659l-.622.621a.75.75 0 0 1-1.06 0l-.622-.621A2.25 2.25 0 0 0 5.258 13H.75a.75.75 0 0 1-.75-.75Zm7.251 10.324.004-5.073-.002-2.253A2.25 2.25 0 0 0 5.003 2.5H1.5v9h3.757a3.75 3.75 0 0 1 1.994.574ZM8.755 4.75l-.004 7.322a3.752 3.752 0 0 1 1.992-.572H14.5v-9h-3.495a2.25 2.25 0 0 0-2.25 2.25Z"/></svg>README.md</div>
  <div class="abs row" style="left:633.5px;top:6.2px;width:57.8px;height:23.4px;justify-content:center;border:1px solid #292e34;background:#151a1e;border-radius:3px;font-size:8.8px;color:#d0d5da">Escape</div>
  <div class="abs" style="left:706px;top:11.5px;color:#d0d5da"><svg width="12.8" height="12.8" viewBox="0 0 16 16"><path d="M11.013 1.427a1.75 1.75 0 0 1 2.474 0l1.086 1.086a1.75 1.75 0 0 1 0 2.474l-8.61 8.61c-.21.21-.47.364-.756.445l-3.251.93a.75.75 0 0 1-.927-.928l.929-3.25c.081-.286.235-.547.445-.758l8.61-8.61Zm.176 4.823L9.75 4.81l-6.286 6.287a.253.253 0 0 0-.064.108l-.558 1.953 1.953-.558a.253.253 0 0 0 .108-.064Zm1.238-3.763a.25.25 0 0 0-.354 0L10.811 3.75l1.439 1.44 1.263-1.263a.25.25 0 0 0 0-.354Z"/></svg></div>
  <svg class="abs" id="banner" style="left:24.3px;top:49.500px" width="684.600" height="70" viewBox="0 0 684.600 70"><rect width="685.5" height="70" fill="#fde7b5"/>
<g fill="none" stroke="#ebd097" stroke-width="1.800" stroke-linecap="round" stroke-linejoin="round">
<path d="M1.8 24.6 17.8 14.7 13.100 31.6 41.700 22.700 22.500 41 42.800 48.500 24.100 57.400 32 70"/>
<path d="M85 43.700A42 27.500 0 1 1 100 48.600L86.500 67Z"/>
<circle cx="94.400" cy="22.700" r="3"/><circle cx="110.100" cy="18.500" r="3"/><circle cx="126.700" cy="15.200" r="3"/>
<path d="M180 36.300 191.700 48M194.700 19.900 204.100 42.100M214.600 14 215.100 39.800M237 19.900 228.300 39.800"/>
<path d="M252.900 5.800 262.300 4.600 258.800 11.700 263.500 12.800 260 22.200 270.500 21 275.200 30.400 283.400 23.400 293.900 28.100 296.300 18.700 305.700 16.400 313.900 17.500 309.600 9.300 315 2.300"/>
<path d="M299.800 51.500 305.700 56.200 312.700 32.800 325.600 50.300 337.300 39.800 340.800 56.200 349 60"/>
<path d="M359.600 14.700 374.800 18.200M372.400 1.100 377.100 10.500M388.900 1.100 386.500 8.200M402.900 8.200 394.700 15.200M395.900 21.800 407.600 24.600M391.200 29.300 397 38.600M383 32.800 379.900 46.800M364.200 31.100 376.700 25.700"/>
<path d="M420.500 57.400 431 50.300Q434 45 427.500 38.600L441.600 39.800 449.300 21 455.600 37.500 464.200 42.100 474.700 33.900 468.900 49.200 477.100 55 492 59"/>
<path d="M521.600 4.600 529.800 17.500 545 8.200 539.200 25.700 549.700 31.100 535.700 35.100 531 50.300 522.800 36.300 509.900 42.100 517.600 26.900 505.200 17.100 519.200 17.500Z"/>
<path d="M511 60 514.600 53.900 517 60M563.800 60 566.800 55.500 569.600 60"/>
<path d="M581.400 4.600C577 14 577.500 28 581.400 38.600 584 47 592 56 600.100 58.500 607 58 613 54 618.900 51.500 622 50.500 628 55 634 62M581.400 4.600C588 4 603 10 609.500 16.400 616 22 622 30 627.100 33.900 633 31 650 23 661 22.200 668 21.500 676 21.500 678.600 22.700 680 26 678 40 672.800 48 670 53 667 58 664 64"/>
<path d="M591.900 29.300C596 26 601 25.500 604.800 26.900 610 29 615 35 616.500 41 614 44.500 610 46 607.100 46.100 602 45.500 598 43.500 595.400 41 592.500 37.500 591 33 591.900 29.300Z"/>
<path d="M635.300 49.200C639 45 644 42.500 649.300 41 654 39.700 660 39 663.400 39.800 664 43 661.500 47.500 658.700 50.300 656 53 652.500 55 649.300 55.500 646 56 642.500 55.500 639.900 53.900 637.500 52.500 636 51 635.300 49.200Z"/>
</g>
<!-- logo top -->
<path d="M128 70V55.500l7.500-4.500V70Z" fill="#f5b800" stroke="#2b3060" stroke-width="1.2"/>
<path d="M249 70V55.500l-7.500-4.500V70Z" fill="#f5b800" stroke="#2b3060" stroke-width="1.2"/>
<path d="M136.600 70V52c2-1.500 4-2.500 8-3 17-2 36 .5 45.300 10 9.300-9.500 28.300-12 45.300-10 4 .5 6 1.500 8 3v18Z" fill="#fff4d6" stroke="#ecd19a" stroke-width="1"/>
<path d="M144.800 70V57.500c0-.8.600-1.300 1.400-1.300 9 .2 18 1.200 24.600 4.300V70Z" fill="#f7b500" stroke="#d49200" stroke-width="1"/>
<path d="M230.900 70V57.500c0-.8-.600-1.300-1.400-1.300-9 .2-17 1.200-23.200 4.300V70Z" fill="#f7b500" stroke="#d49200" stroke-width="1"/>
</svg>
</div>
<!-- SIDEBAR -->
<div class="abs" style="left:774.4px;top:121.400px;width:223.4px;height:28.200px;border:1px solid #292e34;background:#151a1e;border-radius:3px"></div>
<div class="abs" style="left:972px;top:122px;width:1px;height:27px;background:#292e34"></div>
<div class="abs row" style="left:785.6px;top:122px;height:27px;color:#707a87;font-size:10.4px">Search code...</div>
<div class="abs" style="left:979px;top:129.2px;color:#d0d5da"><svg width="12.8" height="12.8" viewBox="0 0 16 16"><path d="M10.68 11.74a6 6 0 0 1-7.922-8.982 6 6 0 0 1 8.982 7.922l3.04 3.04a.749.749 0 0 1-.326 1.275.749.749 0 0 1-.734-.215ZM11.5 7a4.499 4.499 0 1 0-8.997 0A4.499 4.499 0 0 0 11.5 7Z"/></svg></div>
<div class="abs row" style="left:774.5px;top:156.700px;height:18px;font-weight:700;font-size:12.8px;color:#d0d5da">Description</div>
<div class="abs desc" style="top:182.3px">ComicOPDS is a lightweight OPDS<br>server written in Python, designed<br>for serving CBZ comics with<br>metadata extracted from<br><code>ComicInfo.xml</code>. It's optimized for large<br>libraries, supports FastAPI + SQLite<br>+ FTS5 search, thumbnail caching,<br>and streaming (OPDS PSE 1.1).</div>
<div class="abs row" style="left:774.5px;top:324.400px;height:18px;gap:5px;color:#bcc3cb;font-size:12px"><svg width="12.8" height="12.8" viewBox="0 0 16 16"><path d="M0 1.75A.75.75 0 0 1 .75 1h4.253c1.227 0 2.317.59 3 1.501A3.743 3.743 0 0 1 11.006 1h4.245a.75.75 0 0 1 .75.75v10.5a.75.75 0 0 1-.75.75h-4.507a2.25 2.25 0 0 0-1.591.659l-.622.621a.75.75 0 0 1-1.06 0l-.622-.621A2.25 2.25 0 0 0 5.258 13H.75a.75.75 0 0 1-.75-.75Zm7.251 10.324.004-5.073-.002-2.253A2.25 2.25 0 0 0 5.003 2.5H1.5v9h3.757a3.75 3.75 0 0 1 1.994.574ZM8.755 4.75l-.004 7.322a3.752 3.752 0 0 1 1.992-.572H14.5v-9h-3.495a2.25 2.25 0 0 0-2.25 2.25Z"/></svg>Readme</div>
<div class="abs row" style="left:774.5px;top:346px;height:18px;gap:5px;color:#bcc3cb;font-size:12px"><svg width="12.8" height="12.8" viewBox="0 0 16 16"><path d="M1 3.5c0-.626.292-1.165.7-1.59.406-.422.956-.767 1.579-1.041C4.525.32 6.195 0 8 0c1.805 0 3.475.32 4.722.869.622.274 1.172.62 1.578 1.04.408.426.7.965.7 1.591v9c0 .626-.292 1.165-.7 1.59-.406.422-.956.767-1.579 1.041C11.476 15.68 9.806 16 8 16c-1.805 0-3.475-.32-4.721-.869-.623-.274-1.173-.62-1.579-1.04-.408-.426-.7-.965-.7-1.591Zm1.5 0c0 .133.058.318.282.551.227.237.591.483 1.101.707C4.898 5.205 6.353 5.5 8 5.5c1.646 0 3.101-.295 4.118-.742.508-.224.873-.471 1.1-.708.224-.232.282-.417.282-.55 0-.133-.058-.318-.282-.551-.227-.237-.591-.483-1.101-.707C11.102 1.795 9.647 1.5 8 1.5c-1.646 0-3.101.295-4.118.742-.508.224-.873.471-1.1.708-.224.232-.282.417-.282.55Zm0 4.5c0 .133.058.318.282.551.227.237.591.483 1.101.707C4.898 9.705 6.353 10 8 10c1.646 0 3.101-.295 4.118-.742.508-.224.873-.471 1.1-.708.224-.232.282-.417.282-.55V5.724c-.241.15-.503.286-.778.407C11.475 6.68 9.805 7 8 7c-1.805 0-3.475-.32-4.721-.869a6.15 6.15 0 0 1-.779-.407Zm0 2.225V12.5c0 .133.058.318.282.55.227.237.592.484 1.1.708 1.016.447 2.471.742 4.118.742 1.647 0 3.102-.295 4.117-.742.51-.224.874-.47 1.101-.707.224-.233.282-.418.282-.551v-2.275c-.241.15-.503.285-.778.406-1.247.549-2.917.869-4.722.869-1.805 0-3.475-.32-4.721-.869a6.327 6.327 0 0 1-.779-.406Z"/></svg><b>2.5</b><span style="margin-left:2px">MiB</span></div>
<div class="abs" style="left:774.5px;top:384.5px;width:223.5px;height:1px;background:#2b3138"></div>
<div class="abs row" style="left:774.5px;top:392.600px;height:18px;font-weight:700;font-size:12.8px;color:#d0d5da">Languages</div>
<div class="abs" style="left:774.5px;top:424px;width:223.5px;height:8px;border-radius:4px;overflow:hidden;display:flex;gap:1.600px">
  <div style="flex:67.2;background:#3572a5"></div><div style="flex:28.9;background:#e34c26"></div><div style="flex:3.3;background:#a52a22"></div><div style="flex:.6;background:#384d54"></div>
</div>
<div class="abs row lang" style="left:780.3px;top:441.600px;height:18px"><i style="background:#3572a5"></i><b>Python</b>&nbsp;67.2%</div>
<div class="abs row lang" style="left:888.4px;top:441.600px;height:18px"><i style="background:#e34c26"></i><b>HTML</b>&nbsp;28.9%</div>
<div class="abs row lang" style="left:780.3px;top:464.6px;height:18px"><i style="background:#a52a22"></i><b>Jinja</b>&nbsp;3.3%</div>
<div class="abs row lang" style="left:864.500px;top:464.6px;height:18px"><i style="background:#384d54"></i><b>Dockerfile</b>&nbsp;0.6%</div>
</body>
</html>
